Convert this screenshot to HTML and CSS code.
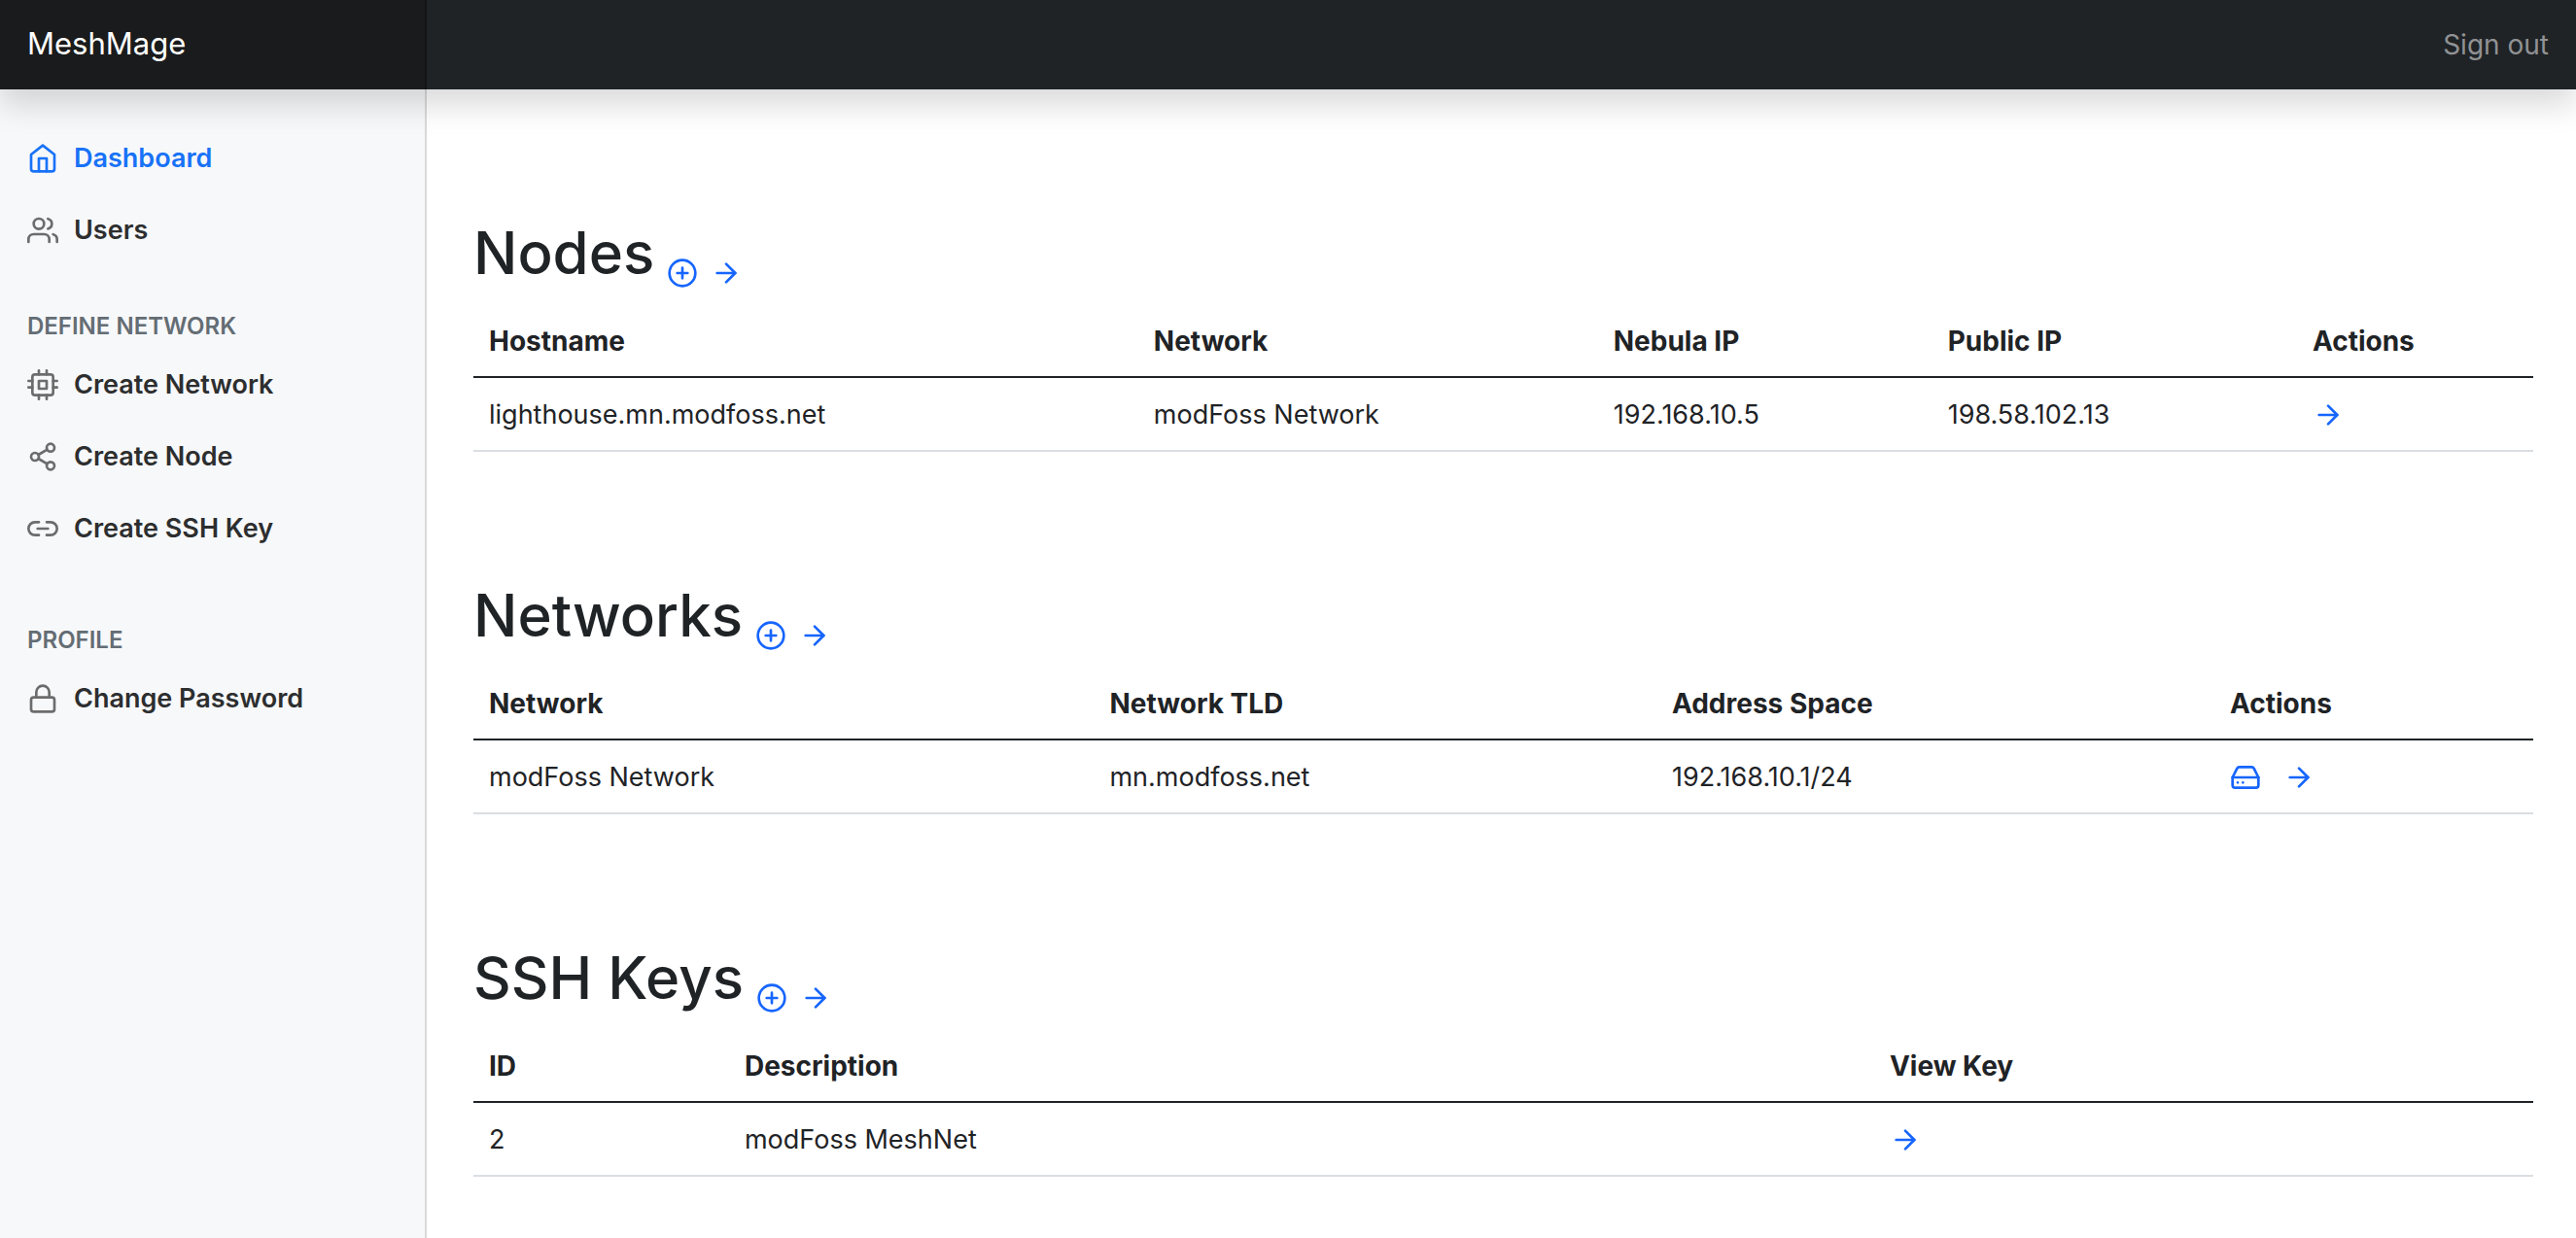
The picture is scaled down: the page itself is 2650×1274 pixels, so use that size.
FILE: index.html
```html
<!DOCTYPE html>
<html lang="en">
<head>
<meta charset="utf-8">
<title>MeshMage</title>
<meta name="viewport" content="width=device-width, initial-scale=1">
<link rel="stylesheet" href="styles.css">
</head>
<body>
<svg class="sprite" aria-hidden="true">
  <symbol id="home" viewBox="0 0 24 24"><path d="M3 9l9-7 9 7v11a2 2 0 0 1-2 2H5a2 2 0 0 1-2-2z"/><polyline points="9 22 9 12 15 12 15 22"/></symbol>
  <symbol id="users" viewBox="0 0 24 24"><path d="M17 21v-2a4 4 0 0 0-4-4H5a4 4 0 0 0-4 4v2"/><circle cx="9" cy="7" r="4"/><path d="M23 21v-2a4 4 0 0 0-3-3.87"/><path d="M16 3.13a4 4 0 0 1 0 7.75"/></symbol>
  <symbol id="cpu" viewBox="0 0 24 24"><rect x="4" y="4" width="16" height="16" rx="2" ry="2"/><rect x="9" y="9" width="6" height="6"/><path d="M9 1v3M15 1v3M9 20v3M15 20v3M20 9h3M20 14h3M1 9h3M1 14h3"/></symbol>
  <symbol id="share" viewBox="0 0 24 24"><circle cx="18" cy="5" r="3"/><circle cx="6" cy="12" r="3"/><circle cx="18" cy="19" r="3"/><path d="M8.59 13.51l6.83 3.98M15.41 6.51l-6.82 3.98"/></symbol>
  <symbol id="link" viewBox="0 0 24 24"><path d="M15 7h3a5 5 0 0 1 5 5 5 5 0 0 1-5 5h-3m-6 0H6a5 5 0 0 1-5-5 5 5 0 0 1 5-5h3"/><path d="M8 12h8"/></symbol>
  <symbol id="lock" viewBox="0 0 24 24"><rect x="3" y="11" width="18" height="11" rx="2" ry="2"/><path d="M7 11V7a5 5 0 0 1 10 0v4"/></symbol>
  <symbol id="plus" viewBox="0 0 24 24"><circle cx="12" cy="12" r="10"/><path d="M12 8v8M8 12h8"/></symbol>
  <symbol id="arrow" viewBox="0 0 24 24"><path d="M5 12h14"/><polyline points="12 5 19 12 12 19"/></symbol>
  <symbol id="drive" viewBox="0 0 24 24"><path d="M22 12H2"/><path d="M5.45 5.11L2 12v6a2 2 0 0 0 2 2h16a2 2 0 0 0 2-2v-6l-3.45-6.89A2 2 0 0 0 16.76 4H7.24a2 2 0 0 0-1.79 1.11z"/><path d="M6 16h.01M10 16h.01"/></symbol>
</svg>

<header class="topbar">
  <a class="brand" href="#">MeshMage</a>
  <a class="signout" href="#">Sign out</a>
</header>

<div class="layout">
  <nav class="sidebar">
    <ul class="menu">
      <li><a class="menu-link active" href="#"><svg class="icon"><use href="#home"/></svg>Dashboard</a></li>
      <li><a class="menu-link" href="#"><svg class="icon"><use href="#users"/></svg>Users</a></li>
    </ul>
    <h6 class="menu-heading">Define Network</h6>
    <ul class="menu menu-spaced">
      <li><a class="menu-link" href="#"><svg class="icon"><use href="#cpu"/></svg>Create Network</a></li>
      <li><a class="menu-link" href="#"><svg class="icon"><use href="#share"/></svg>Create Node</a></li>
      <li><a class="menu-link" href="#"><svg class="icon"><use href="#link"/></svg>Create SSH Key</a></li>
    </ul>
    <h6 class="menu-heading">Profile</h6>
    <ul class="menu">
      <li><a class="menu-link" href="#"><svg class="icon"><use href="#lock"/></svg>Change Password</a></li>
    </ul>
  </nav>

  <main class="content">
    <section>
      <div class="section-head">
        <h2 class="title">Nodes</h2>
        <a href="#" aria-label="Add node"><svg class="icon"><use href="#plus"/></svg></a>
        <a href="#" aria-label="All nodes"><svg class="icon"><use href="#arrow"/></svg></a>
      </div>
      <table class="table nodes">
        <colgroup><col class="c-host"><col class="c-net"><col class="c-nebula"><col class="c-public"><col></colgroup>
        <thead><tr><th>Hostname</th><th>Network</th><th>Nebula IP</th><th>Public IP</th><th>Actions</th></tr></thead>
        <tbody><tr><td>lighthouse.mn.modfoss.net</td><td>modFoss Network</td><td>192.168.10.5</td><td>198.58.102.13</td>
          <td><div class="actions"><a href="#" aria-label="View node"><svg class="icon"><use href="#arrow"/></svg></a></div></td></tr></tbody>
      </table>
    </section>

    <section>
      <div class="section-head">
        <h2 class="title">Networks</h2>
        <a href="#" aria-label="Add network"><svg class="icon"><use href="#plus"/></svg></a>
        <a href="#" aria-label="All networks"><svg class="icon"><use href="#arrow"/></svg></a>
      </div>
      <table class="table networks">
        <colgroup><col class="c-name"><col class="c-tld"><col class="c-space"><col></colgroup>
        <thead><tr><th>Network</th><th>Network TLD</th><th>Address Space</th><th>Actions</th></tr></thead>
        <tbody><tr><td>modFoss Network</td><td>mn.modfoss.net</td><td>192.168.10.1/24</td>
          <td><div class="actions"><a href="#" aria-label="Network nodes"><svg class="icon"><use href="#drive"/></svg></a><a href="#" aria-label="View network"><svg class="icon"><use href="#arrow"/></svg></a></div></td></tr></tbody>
      </table>
    </section>

    <section>
      <div class="section-head">
        <h2 class="title">SSH Keys</h2>
        <a href="#" aria-label="Add SSH key"><svg class="icon"><use href="#plus"/></svg></a>
        <a href="#" aria-label="All SSH keys"><svg class="icon"><use href="#arrow"/></svg></a>
      </div>
      <table class="table keys">
        <colgroup><col class="c-id"><col class="c-desc"><col></colgroup>
        <thead><tr><th>ID</th><th>Description</th><th>View Key</th></tr></thead>
        <tbody><tr><td>2</td><td>modFoss MeshNet</td>
          <td><div class="actions"><a href="#" aria-label="View key"><svg class="icon"><use href="#arrow"/></svg></a></div></td></tr></tbody>
      </table>
    </section>
  </main>
</div>
</body>
</html>
```
FILE: styles.css
```css
* { box-sizing: border-box; }

body {
  margin: 0;
  min-height: 100vh;
  display: flex;
  flex-direction: column;
  background: #fff;
  color: #1f2326;
  font: 400 27px/42px Inter, "Liberation Sans", sans-serif;
}

a { color: #1665fd; text-decoration: none; }

.sprite { display: none; }

.icon {
  display: block;
  flex: none;
  width: 32px;
  height: 32px;
  fill: none;
  stroke: currentColor;
  stroke-width: 2;
  stroke-linecap: round;
  stroke-linejoin: round;
}

/* Top bar */
.topbar {
  position: relative;
  z-index: 1;
  display: flex;
  align-items: center;
  justify-content: space-between;
  height: 92px;
  background: #1f2326;
  box-shadow: 0 16px 32px rgba(0, 0, 0, .15);
}

.brand {
  width: 439px;
  padding: 24px 28px 26px;
  background: #1a1b1c;
  box-shadow: inset -2px 0 0 rgba(0, 0, 0, .25);
  color: #fff;
  font-size: 31px;
}

.signout { padding: 0 28px; color: #919294; font-size: 28px; }

/* Sidebar */
.layout { flex: 1; display: flex; }

.sidebar {
  flex: 0 0 439px;
  padding-top: 33px;
  background: #f7f8fa;
  box-shadow: inset -2px 0 0 rgba(0, 0, 0, .12);
}

.menu { margin: 0; padding: 0; list-style: none; }
.menu-spaced { margin-bottom: 64px; }

.menu-link {
  display: flex;
  align-items: center;
  gap: 16px;
  padding: 17px 28px 15px;
  color: #2d2e2f;
  font-weight: 600;
}
.menu-link .icon { color: #6c6c6c; }
.menu-link.active, .menu-link.active .icon { color: #1872f8; }

.menu-heading {
  margin: 48px 0 8px;
  padding: 0 28px;
  color: #646d74;
  font-size: 24px;
  font-weight: 600;
  line-height: 29px;
  text-transform: uppercase;
}

/* Content */
.content {
  flex: 1;
  display: flex;
  flex-direction: column;
  gap: 129px;
  padding: 129px 44px 64px 48px;
}

.section-head {
  display: flex;
  align-items: flex-end;
  gap: 13px;
  margin-bottom: 16px;
}

.title {
  margin: 0;
  font-size: 60px;
  font-weight: 500;
  line-height: 78px;
  height: 76px;
}

.table {
  width: 100%;
  table-layout: fixed;
  border-collapse: separate;
  border-spacing: 0;
}
.table th, .table td {
  padding: 17px 16px 15px;
  border-bottom: 2px solid #dadee2;
  text-align: left;
}
.table th { border-bottom-color: #1f2326; font-size: 28px; font-weight: 700; }

.c-host { width: 32.27%; }
.c-net { width: 22.32%; }
.c-nebula { width: 16.23%; }
.c-public { width: 17.71%; }
.c-name { width: 30.13%; }
.c-tld { width: 27.3%; }
.c-space { width: 27.09%; }
.c-id { width: 12.41%; }
.c-desc { width: 55.59%; }

.actions { display: flex; gap: 23px; align-items: center; height: 42px; }
```
